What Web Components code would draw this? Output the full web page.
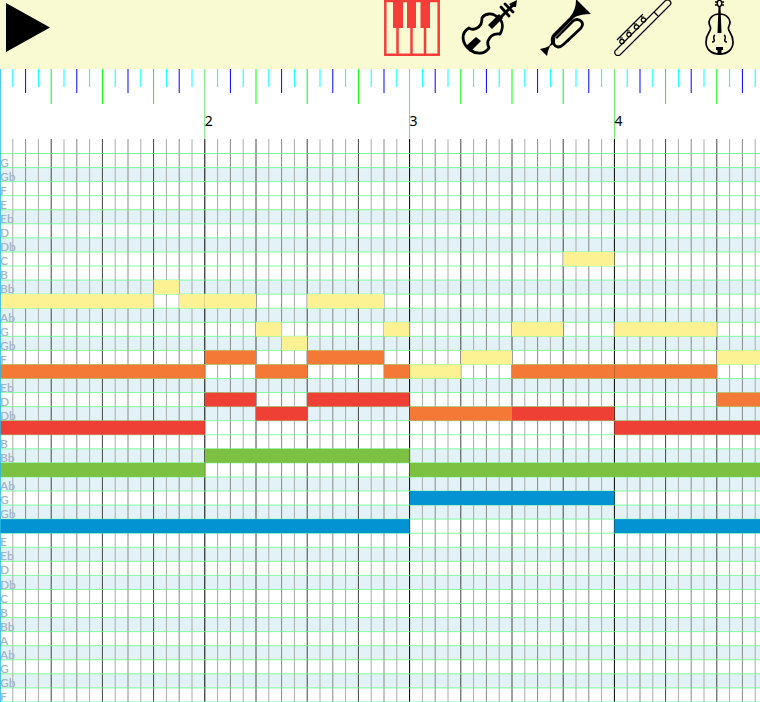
<!DOCTYPE html>
<html lang="en">
<head>
<meta charset="utf-8">
<title>Piano roll</title>
<style>
html, body { margin: 0; min-height: 100%; background: #fff; overflow: hidden; }
body { font-family: Lato, "Noto Sans", sans-serif; color: #000; }
</style>
</head>
<body>
<music-sequencer></music-sequencer>

<template id="toolbar-tpl">
<style>
:host { display: flex; justify-content: space-between; align-items: flex-start; height: 69px; padding: 0 12px 0 6px; box-sizing: border-box; background: #f9f9d2; overflow: hidden; }
nav { display: flex; gap: 21px; }
</style>
<slot name="transport"></slot>
<nav aria-label="Instruments"><slot></slot></nav>
</template>

<template id="button-tpl">
<style>
:host { display: block; }
button { display: block; border: 0; padding: 0; margin: 0; background: none; color: inherit; cursor: pointer; }
::slotted(svg) { display: block; width: 56px; height: 56px; overflow: visible; }
</style>
<button type="button"><slot></slot></button>
</template>

<template id="ruler-tpl">
<style>
:host { display: grid; height: 70px; overflow: hidden; }
svg, ol { grid-area: 1 / 1; width: 2048px; height: 70px; }
ol { display: grid; grid-template-columns: repeat(10, 1fr); margin: 0; padding: 0; list-style: none; font: 14px "Noto Sans", sans-serif; line-height: 16px; align-items: end; }
li { padding-bottom: 10px; }
path { fill: none; stroke-width: 1; vector-effect: non-scaling-stroke; }
</style>
<svg viewBox="0 0 160 70" preserveAspectRatio="none" aria-hidden="true"></svg>
<ol></ol>
</template>

<template id="roll-tpl">
<style>
:host { display: grid; overflow: hidden; }
svg, ol { grid-area: 1 / 1; width: 2048px; height: 563px; }
ol { display: grid; grid-template-rows: repeat(39, 1fr); margin: 0; padding: 17px 0 0; height: 548px; list-style: none; font-size: 12px; font-weight: 600; line-height: 14px; color: #a4b4c8; }
path { fill: none; stroke-width: 1; vector-effect: non-scaling-stroke; }
</style>
<svg id="grid" viewBox="0 0 160 9008" preserveAspectRatio="none" aria-hidden="true"></svg>
<ol></ol>
<svg id="notes" viewBox="0 0 160 9008" preserveAspectRatio="none" role="img" aria-label="Notes"></svg>
</template>

<template id="app-tpl">
<style>
:host { display: block; }
main { position: relative; }
.playhead { position: absolute; left: 0; top: 0; bottom: 0; width: 1px; background: #28b8e8; opacity: .8; }
</style>
<tool-bar>
<icon-button slot="transport" label="Play"><svg viewBox="0 0 56 56"><path d="M0 3L44 27.500L0 52Z"/></svg></icon-button>
<icon-button label="Piano"><svg viewBox="0 0 56 56"><g fill="none" stroke="#f53d3a"><path stroke-width="2.500" d="M1.300 0V54.700H54.700V0"/><path stroke-width="2.500" d="M0 1H56M13.500 28V54M27.500 28V54M41 28V54"/></g><path fill="#f53d3a" d="M9 0h10v28H9zM23 0h9v28h-9zM36.500 0h9.500v28h-9.500z"/></svg></icon-button>
<icon-button label="Viola"><svg viewBox="0 0 56 56"><path d="M21 18C24 13 31 13 35 16C42 20 43 27 39 34C33 33 29 36 27 41C26 44 27 46 28 48C24 54 16 55 9 50C1 44-1 33 8 28C12 31 18 28 20 24C21 21 21 19 21 18Z" fill="none" stroke="#000" stroke-width="2.800" stroke-linejoin="round"/><path d="M27 25L31 29L42 18L38 14ZM15 37L20 41L10 51L5 46ZM48 4L56 0L55 7L51 7Z"/><path d="M39 18L53 4" stroke="#000" stroke-width="3"/><path d="M40 7L48 16M44 4L52 12" stroke="#000" stroke-width="2.800" stroke-linecap="round"/></svg></icon-button>
<icon-button label="Trumpet"><svg viewBox="0 0 56 56"><path d="M39 0L53 14Q43 14 37 17L17 37Q15 40 16 44L12 46Q10 50 9 56L2 49Q8 48 11 46L13 43Q12 37 15 34L32 17Q38 10 38 0Z"/><path d="M16 38Q14 46 20 47Q23 47 26 44L43 28Q46 24 43 21Q39 18 35 21L18 38" fill="none" stroke="#000" stroke-width="2.800"/><path d="M17 38L33 21" stroke="#666" stroke-width="1"/></svg></icon-button>
<icon-button label="Flute"><svg viewBox="0 0 56 56"><g fill="none" stroke="#000" stroke-width="1.200"><path d="M0 51L50 1Q53-1 55 1Q57 3 55 5L5 55Q3 56 1 55Q-1 53 0 51ZM39 12L43 16M2 40L28 14M5 38L8 38M12 31L15 31M19 24L22 24M26 17L29 17"/><circle cx="7" cy="41.500" r="2.200"/><circle cx="14" cy="34.500" r="2.200"/><circle cx="21.500" cy="27" r="2.200"/><circle cx="28.500" cy="20" r="2.200"/></g></svg></icon-button>
<icon-button label="Cello"><svg viewBox="0 0 56 56"><g fill="none" stroke="#000" stroke-width="1.700"><path d="M27.500 14C20 14 15 20 18 26C21 31 14 32 14 42C14 50 20 54 27.500 54C35 54 41 50 41 42C41 32 34 31 37 26C40 20 35 14 27.500 14Z"/><path d="M27.500 0C24 1 25 6 27.500 7C30 6 31 1 27.500 0M23 2H25M30 2H32M23 5H25M30 5H32M23 35Q21 36 22 39Q23 42 20 42M32 35Q34 36 33 39Q32 42 35 42" stroke-width="1.500"/></g><path d="M26.500 6H28.500L29.500 33H25.500ZM24 47H31V50H29.500V55H25.500V50H24Z"/></svg></icon-button>
</tool-bar>
<main>
<measure-ruler></measure-ruler>
<note-grid></note-grid>
<div class="playhead"></div>
</main>
</template>

<script>
const stamp = (host, id) => {
  const root = host.attachShadow({ mode: 'open' });
  root.append(document.getElementById(id).content.cloneNode(true));
  return root;
};
const STEPS = 160;
const MEASURES = 10;
const MEASURE_WIDTH = 2048 / MEASURES;

customElements.define('tool-bar', class extends HTMLElement {
  constructor() { super(); stamp(this, 'toolbar-tpl'); }
});

customElements.define('icon-button', class extends HTMLElement {
  connectedCallback() {
    if (this.shadowRoot) return;
    stamp(this, 'button-tpl').querySelector('button').setAttribute('aria-label', this.getAttribute('label'));
  }
});

customElements.define('measure-ruler', class extends HTMLElement {
  constructor() {
    super();
    const root = stamp(this, 'ruler-tpl');
    let marks = '';
    for (let i = 1; i < STEPS; i++) {
      const [h, c] = i % 16 === 0 ? [70, '#66e466'] : i % 4 === 0 ? [35, '#00ff00'] : i % 2 === 0 ? [24, '#0000ff'] : [18, '#00ffff'];
      marks += `<path stroke="${c}" d="M${i} 0V${h}"/>`;
    }
    root.querySelector('svg').innerHTML = marks;
    const number = () => {
      const shown = Math.min(MEASURES, Math.ceil(innerWidth / MEASURE_WIDTH));
      root.querySelector('ol').innerHTML = Array.from({ length: shown }, (_, i) => `<li>${i ? i + 1 : ''}</li>`).join('');
    };
    number();
    addEventListener('resize', number);
  }
});

customElements.define('note-grid', class extends HTMLElement {
  constructor() {
    super();
    const root = stamp(this, 'roll-tpl');
    const names = ['G', 'Gb', 'F', 'E', 'Eb', 'D', 'Db', 'C', 'B', 'Bb', 'A', 'Ab'];
    const ROW = 225, TOP = 232;
    let grid = '', labels = '';
    for (let r = 0; r < 39; r++) {
      const name = names[r % 12];
      labels += `<li>${name}</li>`;
      if (name.length > 1) grid += `<rect x="0" y="${TOP + r * ROW}" width="160" height="${ROW}" fill="#e3f2f7"/>`;
    }
    for (let i = 1; i < STEPS; i++) {
      const c = i % 16 === 0 ? '#000' : i % 4 === 0 ? '#444' : i % 2 === 0 ? '#888' : '#aaa';
      grid += `<path stroke="${c}" d="M${i} 0V9008"/>`;
    }
    for (let r = 0; r < 40; r++) grid += `<path stroke="#66ff90" stroke-opacity=".8" d="M0 ${TOP + r * ROW}H160"/>`;
    root.querySelector('#grid').innerHTML = grid;
    root.querySelector('ol').innerHTML = labels;

    // Each note is [first step, length in steps, row].
    const voices = {
      '#fdf293': [[0,12,10],[12,2,9],[14,2,10],[16,4,10],[20,2,12],[22,2,13],[24,6,10],[30,2,12],[32,4,15],[36,4,14],[40,4,12],[44,4,7],[48,8,12],[56,8,14]],
      '#f57936': [[0,16,15],[16,4,14],[20,4,15],[24,6,14],[30,2,15],[32,8,18],[40,8,15],[48,8,15],[56,8,17]],
      '#ef4035': [[0,16,19],[16,4,17],[20,4,18],[24,8,17],[40,8,18],[48,16,19]],
      '#7cc142': [[0,16,22],[16,16,21],[32,32,22]],
      '#0392d2': [[0,32,26],[32,16,24],[48,16,26]]
    };
    root.querySelector('#notes').innerHTML = Object.entries(voices).map(([c, list]) =>
      list.map(([x, w, r]) => `<rect fill="${c}" x="${x}" y="${TOP + r * ROW}" width="${w}" height="${ROW}"/>`).join('')).join('');
  }
});

customElements.define('music-sequencer', class extends HTMLElement {
  constructor() { super(); stamp(this, 'app-tpl'); }
});
</script>
</body>
</html>
